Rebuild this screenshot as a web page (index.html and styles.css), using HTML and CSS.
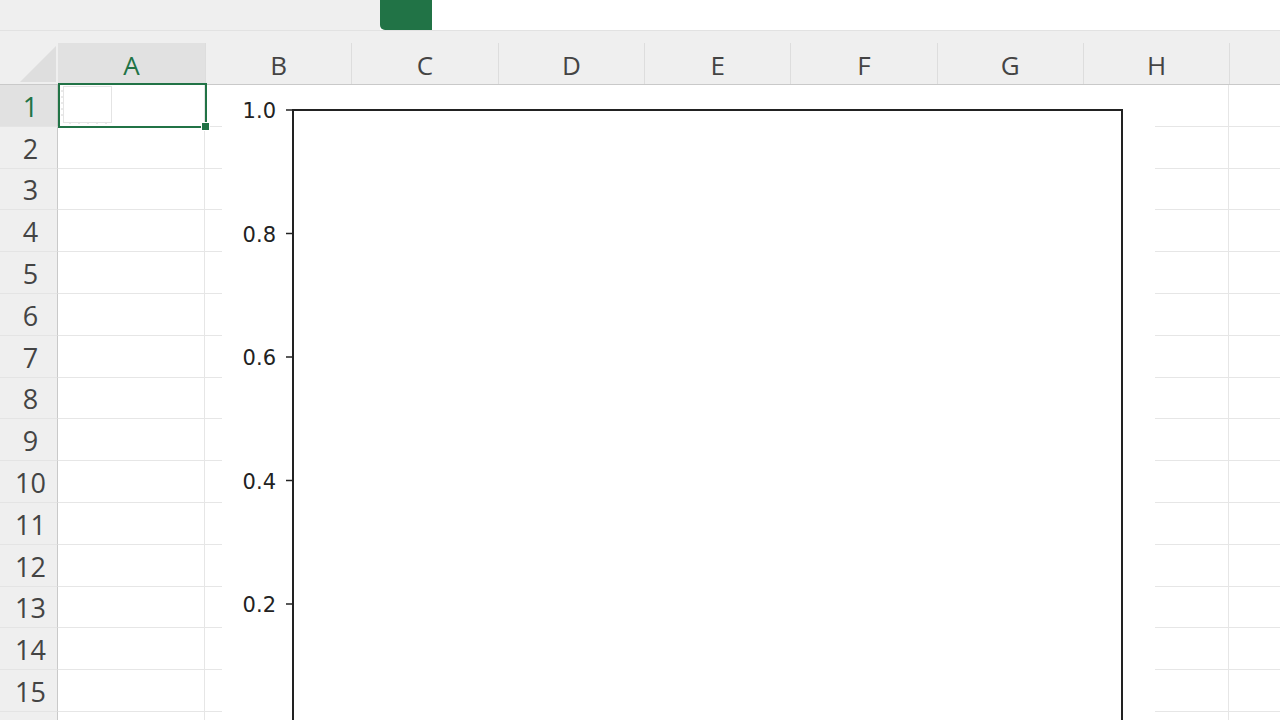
FILE: index.html
```html
<!DOCTYPE html>
<html>
<head>
<meta charset="utf-8">
<link rel="stylesheet" href="styles.css">
</head>
<body>
<div class="app">
  <div class="topbar">
    <div class="tb-left"></div>
    <div class="tab"></div>
    <div class="tb-right"></div>
  </div>
  <div class="band"></div>
  <div class="colhead">
    <div class="corner"><div class="tri"></div></div>
    <div class="ch sel">A</div>
    <div class="ch">B</div>
    <div class="ch">C</div>
    <div class="ch">D</div>
    <div class="ch">E</div>
    <div class="ch">F</div>
    <div class="ch">G</div>
    <div class="ch">H</div>
    <div class="ch"></div>
  </div>
  <div class="sheet">
    <div class="row"><div class="rh sel">1</div><div class="cell a"></div><div class="cell"></div><div class="cell"></div><div class="cell"></div><div class="cell"></div><div class="cell"></div><div class="cell"></div><div class="cell"></div><div class="cell"></div></div>
    <div class="row"><div class="rh">2</div><div class="cell a"></div><div class="cell"></div><div class="cell"></div><div class="cell"></div><div class="cell"></div><div class="cell"></div><div class="cell"></div><div class="cell"></div><div class="cell"></div></div>
    <div class="row"><div class="rh">3</div><div class="cell a"></div><div class="cell"></div><div class="cell"></div><div class="cell"></div><div class="cell"></div><div class="cell"></div><div class="cell"></div><div class="cell"></div><div class="cell"></div></div>
    <div class="row"><div class="rh">4</div><div class="cell a"></div><div class="cell"></div><div class="cell"></div><div class="cell"></div><div class="cell"></div><div class="cell"></div><div class="cell"></div><div class="cell"></div><div class="cell"></div></div>
    <div class="row"><div class="rh">5</div><div class="cell a"></div><div class="cell"></div><div class="cell"></div><div class="cell"></div><div class="cell"></div><div class="cell"></div><div class="cell"></div><div class="cell"></div><div class="cell"></div></div>
    <div class="row"><div class="rh">6</div><div class="cell a"></div><div class="cell"></div><div class="cell"></div><div class="cell"></div><div class="cell"></div><div class="cell"></div><div class="cell"></div><div class="cell"></div><div class="cell"></div></div>
    <div class="row"><div class="rh">7</div><div class="cell a"></div><div class="cell"></div><div class="cell"></div><div class="cell"></div><div class="cell"></div><div class="cell"></div><div class="cell"></div><div class="cell"></div><div class="cell"></div></div>
    <div class="row"><div class="rh">8</div><div class="cell a"></div><div class="cell"></div><div class="cell"></div><div class="cell"></div><div class="cell"></div><div class="cell"></div><div class="cell"></div><div class="cell"></div><div class="cell"></div></div>
    <div class="row"><div class="rh">9</div><div class="cell a"></div><div class="cell"></div><div class="cell"></div><div class="cell"></div><div class="cell"></div><div class="cell"></div><div class="cell"></div><div class="cell"></div><div class="cell"></div></div>
    <div class="row"><div class="rh">10</div><div class="cell a"></div><div class="cell"></div><div class="cell"></div><div class="cell"></div><div class="cell"></div><div class="cell"></div><div class="cell"></div><div class="cell"></div><div class="cell"></div></div>
    <div class="row"><div class="rh">11</div><div class="cell a"></div><div class="cell"></div><div class="cell"></div><div class="cell"></div><div class="cell"></div><div class="cell"></div><div class="cell"></div><div class="cell"></div><div class="cell"></div></div>
    <div class="row"><div class="rh">12</div><div class="cell a"></div><div class="cell"></div><div class="cell"></div><div class="cell"></div><div class="cell"></div><div class="cell"></div><div class="cell"></div><div class="cell"></div><div class="cell"></div></div>
    <div class="row"><div class="rh">13</div><div class="cell a"></div><div class="cell"></div><div class="cell"></div><div class="cell"></div><div class="cell"></div><div class="cell"></div><div class="cell"></div><div class="cell"></div><div class="cell"></div></div>
    <div class="row"><div class="rh">14</div><div class="cell a"></div><div class="cell"></div><div class="cell"></div><div class="cell"></div><div class="cell"></div><div class="cell"></div><div class="cell"></div><div class="cell"></div><div class="cell"></div></div>
    <div class="row"><div class="rh">15</div><div class="cell a"></div><div class="cell"></div><div class="cell"></div><div class="cell"></div><div class="cell"></div><div class="cell"></div><div class="cell"></div><div class="cell"></div><div class="cell"></div></div>
    <div class="row"><div class="rh"></div><div class="cell a"></div><div class="cell"></div><div class="cell"></div><div class="cell"></div><div class="cell"></div><div class="cell"></div><div class="cell"></div><div class="cell"></div><div class="cell"></div></div>

    <div class="selection">
      <svg class="thumb" width="52" height="38" viewBox="0 0 52 38">
        <rect x="3.5" y="0.5" width="48" height="36" fill="none" stroke="#e4e4e4" stroke-width="1"/>
        <g stroke="#d4d4d4" stroke-width="1">
          <line x1="1" y1="5" x2="3" y2="5"/><line x1="1" y1="11" x2="3" y2="11"/><line x1="1" y1="17" x2="3" y2="17"/><line x1="1" y1="23" x2="3" y2="23"/><line x1="1" y1="29" x2="3" y2="29"/>
          <line x1="10" y1="37" x2="10" y2="38"/><line x1="19" y1="37" x2="19" y2="38"/><line x1="28" y1="37" x2="28" y2="38"/><line x1="37" y1="37" x2="37" y2="38"/><line x1="46" y1="37" x2="46" y2="38"/>
        </g>
      </svg>
      <div class="handle"></div>
    </div>

    <div class="chart">
      <svg width="933" height="640" viewBox="0 0 933 640">
        <rect x="71" y="25" width="829" height="700" fill="none" stroke="#222" stroke-width="2"/>
        <g stroke="#222" stroke-width="1.5">
          <line x1="64" y1="25" x2="71" y2="25"/>
          <line x1="64" y1="148.5" x2="71" y2="148.5"/>
          <line x1="64" y1="272" x2="71" y2="272"/>
          <line x1="64" y1="395.5" x2="71" y2="395.5"/>
          <line x1="64" y1="519" x2="71" y2="519"/>
        </g>
        <g class="ticks" text-anchor="end">
          <text x="54" y="33">1.0</text>
          <text x="54" y="156.5">0.8</text>
          <text x="54" y="280">0.6</text>
          <text x="54" y="403.5">0.4</text>
          <text x="54" y="527">0.2</text>
        </g>
      </svg>
    </div>
  </div>
</div>
</body>
</html>
```

FILE: styles.css
```css
html, body {
  margin: 0;
  padding: 0;
  background: #ffffff;
  overflow: hidden;
}
.app {
  width: 1280px;
  height: 720px;
  overflow: hidden;
  font-family: "Open Sans", "Noto Sans", "Liberation Sans", sans-serif;
  background: #ffffff;
}
.topbar {
  display: flex;
  height: 30px;
  border-bottom: 1px solid #e2e2e2;
}
.tb-left {
  width: 380px;
  background: #efefef;
}
.tab {
  width: 52px;
  background: #217346;
  border-bottom-left-radius: 5px;
}
.tb-right {
  flex: 1;
  background: #ffffff;
}
.band {
  height: 12px;
  background: #efefef;
}
.colhead {
  display: flex;
  height: 41px;
  background: #efefef;
  border-bottom: 1px solid #c9c9c9;
}
.corner {
  width: 58px;
  flex: none;
  position: relative;
}
.tri {
  position: absolute;
  right: 2px;
  bottom: 2px;
  width: 0;
  height: 0;
  border-left: 36px solid transparent;
  border-bottom: 36px solid #dedede;
}
.ch {
  width: 146.33px;
  flex: none;
  box-sizing: border-box;
  border-left: 1px solid #dddddd;
  color: #444444;
  font-size: 26px;
  display: flex;
  align-items: center;
  justify-content: center;
  padding-top: 2px;
}
.ch.sel {
  width: 147px;
  background: #e1e1e1;
  color: #217346;
  border-left: none;
}
.sheet {
  position: relative;
}
.row {
  display: flex;
  height: 41.8px;
}
.rh {
  width: 58px;
  flex: none;
  box-sizing: border-box;
  background: #efefef;
  border-right: 1px solid #c9c9c9;
  border-bottom: 1px solid #e4e4e4;
  color: #444444;
  font-size: 27px;
  display: flex;
  align-items: center;
  justify-content: center;
  padding-top: 2px;
  padding-left: 4px;
}
.rh.sel {
  background: #e1e1e1;
  color: #217346;
}
.cell {
  width: 146.33px;
  flex: none;
  box-sizing: border-box;
  border-right: 1px solid #e6e6e6;
  border-bottom: 1px solid #e6e6e6;
}
.cell.a {
  width: 147px;
}
.selection {
  position: absolute;
  left: 58px;
  top: -2px;
  width: 149px;
  height: 45px;
  box-sizing: border-box;
  border: 2px solid #217346;
}
.thumb {
  position: absolute;
  left: 0;
  top: 1px;
}
.handle {
  position: absolute;
  right: -5px;
  bottom: -5px;
  width: 7px;
  height: 7px;
  background: #217346;
  border: 1px solid #ffffff;
}
.chart {
  position: absolute;
  left: 222px;
  top: 0;
  width: 933px;
  height: 640px;
  background: #ffffff;
}
.chart svg {
  display: block;
}
.ticks text {
  font-family: "DejaVu Sans", sans-serif;
  font-size: 21px;
  fill: #222222;
}
```
